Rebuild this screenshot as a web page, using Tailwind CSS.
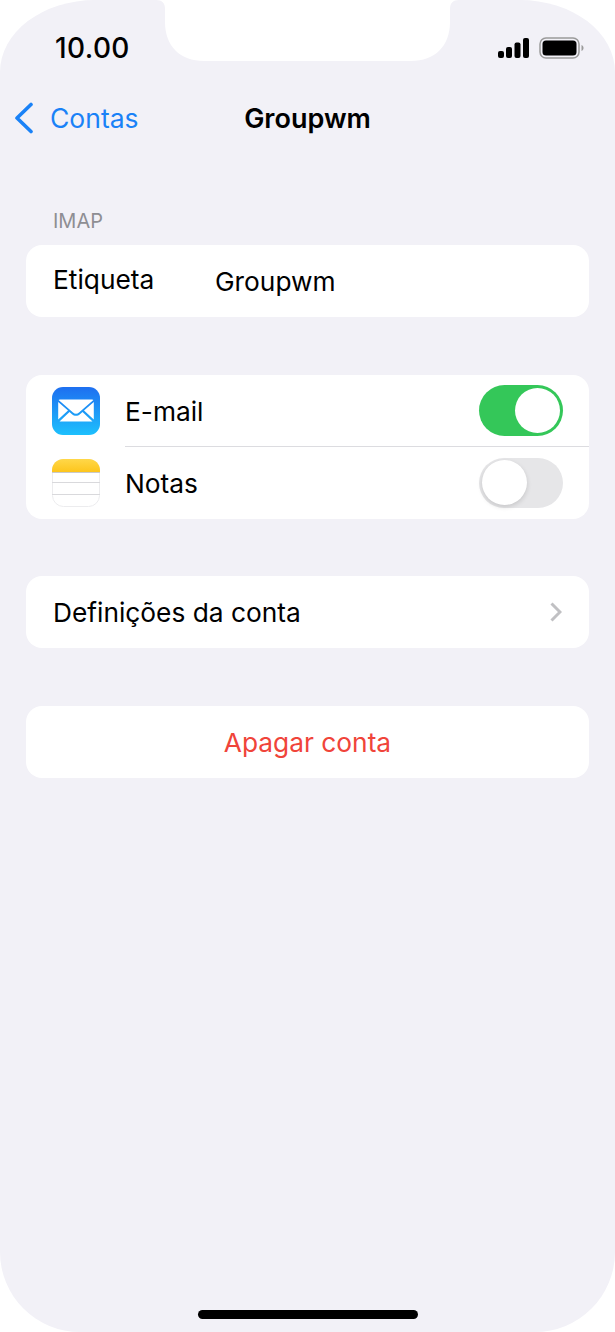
<!DOCTYPE html>
<html lang="pt">
<head>
<meta charset="utf-8">
<script src="https://cdn.jsdelivr.net/npm/@tailwindcss/browser@4"></script>
<title>Groupwm</title>
</head>
<body class="bg-white">
<div class="relative w-[615px] h-[1332px] overflow-hidden bg-[#f2f1f7] rounded-tl-[95px_72px] rounded-tr-[95px_72px] rounded-bl-[80px] rounded-br-[80px] font-['Inter',sans-serif] text-black">
  <!-- notch -->
  <svg width="615" height="62" viewBox="0 0 615 62" class="absolute left-0 top-0 block"><path d="M156 0C162 0 165 3 165 9V22C165 46 180 61 204 61H411C435 61 450 46 450 22V9C450 3 453 0 459 0Z" fill="#fff"/></svg>

  <!-- status bar -->
  <div class="relative flex items-center justify-between h-[48px] pt-[48px] pl-[55px] pr-[31px]">
    <span class="text-[28px] leading-none font-medium tracking-[0.4px]">10.00</span>
    <div class="flex items-center gap-[9px]">
      <svg width="33" height="20" viewBox="0 0 33 20" class="block"><g fill="#000"><rect x="1" y="13" width="6" height="7" rx="2"/><rect x="9" y="9" width="6" height="11" rx="2"/><rect x="17.500" y="4.500" width="6" height="15.500" rx="2"/><rect x="26" y="0" width="6" height="20" rx="2"/></g></svg>
      <svg width="45" height="22" viewBox="0 0 45 22" class="block"><rect x="1" y="1" width="39" height="20" rx="6" fill="none" stroke="#9a9a9a" stroke-width="1.500"/><rect x="3.500" y="3.500" width="34" height="15" rx="3.500" fill="#000"/><path d="M42.500 8v6c1.300-.4 2-1.700 2-3s-.7-2.600-2-3z" fill="#9a9a9a"/></svg>
    </div>
  </div>

  <!-- nav -->
  <div class="relative flex items-center justify-center h-[44px] mt-[48px]">
    <div class="absolute left-[14px] top-0 h-full flex items-center gap-[16px] text-[#1a82f7]">
      <svg width="20" height="32" viewBox="0 0 20 32" class="block"><path d="M17 2.500 3 16l14 13.500" fill="none" stroke="#1a82f7" stroke-width="3.600" stroke-linecap="round" stroke-linejoin="round"/></svg>
      <span class="text-[26.500px] leading-none mt-[1px]">Contas</span>
    </div>
    <span class="text-[27px] leading-none font-semibold mt-[1px]">Groupwm</span>
  </div>

  <!-- content -->
  <div class="px-[26px]">
    <div class="pl-[27px] pt-[69px] h-[105px] text-[20px] leading-[24px] text-[#8e8e93]">IMAP</div>

    <div class="flex items-center h-[72px] rounded-[16px] bg-white pl-[27px] text-[26.300px]">
      <span class="w-[162px] -mt-[2px]">Etiqueta</span>
      <span class="mt-[1px]">Groupwm</span>
    </div>

    <div class="mt-[58px] rounded-[16px] bg-white overflow-hidden">
      <div class="flex items-center h-[71px] pl-[26px] pr-[26px]">
        <svg width="48" height="48" viewBox="0 0 48 48" class="block shrink-0 mr-[25px]">
          <defs><linearGradient id="m" x1="0" y1="0" x2="0" y2="1"><stop offset="0" stop-color="#1e6ff0"/><stop offset="1" stop-color="#1dc0fd"/></linearGradient></defs>
          <rect width="48" height="48" rx="11" fill="url(#m)"/>
          <path d="M8 12.500h32c.8 0 1.200.2 1.400.5L27 25.500c-1.800 1.600-4.200 1.600-6 0L6.600 13c.2-.3.600-.5 1.400-.5z" fill="#fff"/>
          <path d="M6.200 15 16 23.600 6.200 32.500zM41.800 15 32 23.600 41.800 32.500zM17.500 25l2.500 2.200c2.400 2 5.600 2 8 0l2.500-2.200L40.500 34.500h-33z" fill="#fff"/>
        </svg>
        <span class="flex-1 text-[26.300px] mt-[2px]">E-mail</span>
        <div class="flex justify-end items-center w-[84px] h-[51px] rounded-full bg-[#34c759] p-[3px]">
          <div class="w-[45px] h-[45px] rounded-full bg-white"></div>
        </div>
      </div>
      <div class="h-px ml-[99px] bg-[#dcdce0]"></div>
      <div class="flex items-center h-[72px] pl-[26px] pr-[26px]">
        <svg width="48" height="48" viewBox="0 0 48 48" class="block shrink-0 mr-[25px]">
          <defs><linearGradient id="n" x1="0" y1="0" x2="0" y2="1"><stop offset="0" stop-color="#ffd84a"/><stop offset="1" stop-color="#fdc51c"/></linearGradient></defs>
          <rect x=".5" y=".5" width="47" height="47" rx="11" fill="#fff" stroke="#ececee"/>
          <path d="M0 13V11C0 5 5 0 11 0h26c6 0 11 5 11 11v2z" fill="url(#n)"/>
          <rect y="13" width="48" height="1" fill="#c9c9c9"/>
          <rect y="23" width="48" height="1" fill="#d9d9dc"/>
          <rect y="35" width="48" height="1" fill="#d9d9dc"/>
        </svg>
        <span class="flex-1 text-[26.300px] mt-[2px]">Notas</span>
        <div class="flex items-center w-[84px] h-[50px] rounded-full bg-[#e6e6e8] p-[3px] -mt-[1px]">
          <div class="w-[45px] h-[45px] rounded-full bg-white shadow-[0_2px_5px_rgba(0,0,0,0.14)]"></div>
        </div>
      </div>
    </div>

    <div class="mt-[57px] flex items-center justify-between h-[72px] rounded-[16px] bg-white pl-[27px] pr-[27px] text-[26.300px]">
      <span class="mt-[2px]">Definições da conta</span>
      <svg width="12" height="20" viewBox="0 0 12 20" class="block"><path d="M1.500 1.500 10 10l-8.500 8.500" fill="none" stroke="#c0c0c3" stroke-width="3"/></svg>
    </div>

    <div class="mt-[58px] flex items-center justify-center h-[72px] rounded-[16px] bg-white text-[26.300px] text-[#f0443a]"><span class="mt-[2px]">Apagar conta</span></div>
  </div>

  <!-- home indicator -->
  <div class="absolute left-[198px] bottom-[13px] w-[220px] h-[9px] rounded-full bg-black"></div>
</div>
</body>
</html>
